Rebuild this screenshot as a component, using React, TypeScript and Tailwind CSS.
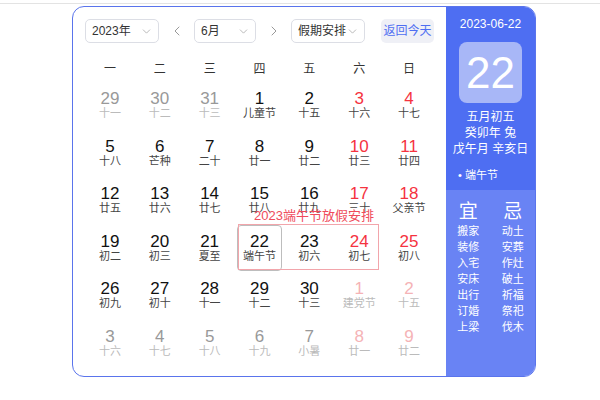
import { ChevronDown, ChevronLeft, ChevronRight } from "lucide-react";

type Day = { n: number; lunar: string; kind: "prev" | "cur" | "next" };

const ROWS: Day[][] = [
  [
    { n: 29, lunar: "十一", kind: "prev" },
    { n: 30, lunar: "十二", kind: "prev" },
    { n: 31, lunar: "十三", kind: "prev" },
    { n: 1, lunar: "儿童节", kind: "cur" },
    { n: 2, lunar: "十五", kind: "cur" },
    { n: 3, lunar: "十六", kind: "cur" },
    { n: 4, lunar: "十七", kind: "cur" },
  ],
  [
    { n: 5, lunar: "十八", kind: "cur" },
    { n: 6, lunar: "芒种", kind: "cur" },
    { n: 7, lunar: "二十", kind: "cur" },
    { n: 8, lunar: "廿一", kind: "cur" },
    { n: 9, lunar: "廿二", kind: "cur" },
    { n: 10, lunar: "廿三", kind: "cur" },
    { n: 11, lunar: "廿四", kind: "cur" },
  ],
  [
    { n: 12, lunar: "廿五", kind: "cur" },
    { n: 13, lunar: "廿六", kind: "cur" },
    { n: 14, lunar: "廿七", kind: "cur" },
    { n: 15, lunar: "廿八", kind: "cur" },
    { n: 16, lunar: "廿九", kind: "cur" },
    { n: 17, lunar: "三十", kind: "cur" },
    { n: 18, lunar: "父亲节", kind: "cur" },
  ],
  [
    { n: 19, lunar: "初二", kind: "cur" },
    { n: 20, lunar: "初三", kind: "cur" },
    { n: 21, lunar: "夏至", kind: "cur" },
    { n: 22, lunar: "端午节", kind: "cur" },
    { n: 23, lunar: "初六", kind: "cur" },
    { n: 24, lunar: "初七", kind: "cur" },
    { n: 25, lunar: "初八", kind: "cur" },
  ],
  [
    { n: 26, lunar: "初九", kind: "cur" },
    { n: 27, lunar: "初十", kind: "cur" },
    { n: 28, lunar: "十一", kind: "cur" },
    { n: 29, lunar: "十二", kind: "cur" },
    { n: 30, lunar: "十三", kind: "cur" },
    { n: 1, lunar: "建党节", kind: "next" },
    { n: 2, lunar: "十五", kind: "next" },
  ],
  [
    { n: 3, lunar: "十六", kind: "next" },
    { n: 4, lunar: "十七", kind: "next" },
    { n: 5, lunar: "十八", kind: "next" },
    { n: 6, lunar: "十九", kind: "next" },
    { n: 7, lunar: "小暑", kind: "next" },
    { n: 8, lunar: "廿一", kind: "next" },
    { n: 9, lunar: "廿二", kind: "next" },
  ],
];

const WEEK = ["一", "二", "三", "四", "五", "六", "日"];
const YI = ["搬家", "装修", "入宅", "安床", "出行", "订婚", "上梁"];
const JI = ["动土", "安葬", "作灶", "破土", "祈福", "祭祀", "伐木"];

export default function App() {
  return (
    <div className="min-h-[400px] bg-white pt-[3px] font-['Liberation_Sans','Noto_Sans_CJK_SC',sans-serif]">
      <div className="border-t border-[#e3e3e3] pt-[2px]">
        <div className="ml-[72px] flex h-[371px] w-[464px] overflow-hidden rounded-[12px] border border-[#5a74ec]">
          {/* Left: calendar */}
          <div className="w-[374px] px-3 pt-3">
            {/* Controls */}
            <div className="flex h-[24px] items-center">
              <Select label="2023年" width="w-[74px]" />
              <div className="flex w-[35px] justify-center text-[#999]">
                <ChevronLeft size={16} strokeWidth={1.5} />
              </div>
              <Select label="6月" width="w-[62px]" />
              <div className="flex w-[35px] justify-center text-[#999]">
                <ChevronRight size={16} strokeWidth={1.5} />
              </div>
              <Select label="假期安排" width="w-[74px]" />
              <button className="ml-[16px] h-[24px] w-[53px] rounded-[5px] bg-[#eff0f6] text-[12px] text-[#4e6ef2]">
                返回今天
              </button>
            </div>

            {/* Week header */}
            <div className="mt-[14px] grid h-[24px] grid-cols-7 items-center text-center text-[12px] text-[#333]">
              {WEEK.map((w) => (
                <span key={w}>{w}</span>
              ))}
            </div>

            {/* Days */}
            <div className="relative mt-[2px]">
              {ROWS.map((row, ri) => (
                <div key={ri} className="grid h-[47.5px] grid-cols-7">
                  {row.map((d, ci) => (
                    <DayCell key={ci} day={d} weekend={ci >= 5} selected={ri === 3 && ci === 3} />
                  ))}
                </div>
              ))}

              {/* Holiday overlay */}
              <div className="absolute left-[153px] top-[141px] h-[46px] w-[141px] border border-[#f2a5ab]" />
              <div className="absolute left-[154px] top-[124px] w-[150px] text-center text-[13px] leading-[18px] text-[#ef4b5b]">
                2023端午节放假安排
              </div>
            </div>
          </div>

          {/* Right: detail panel */}
          <div className="flex w-[90px] flex-col text-white">
            <div className="flex flex-col items-center bg-[#4e6ef2] pb-[7px] pt-[9px]">
              <div className="text-[12px] leading-[16px]">2023-06-22</div>
              <div className="mt-[10px] flex h-[61px] w-[63px] items-center justify-center rounded-[8px] bg-[#a8b7f7] text-[44px] leading-none">
                22
              </div>
              <div className="mt-[6px] text-center text-[12px] leading-[16px]">
                <div>五月初五</div>
                <div>癸卯年 兔</div>
                <div>戊午月 辛亥日</div>
              </div>
              <div className="mt-[10px] w-full pl-[12px] text-[11px] leading-[16px]">• 端午节</div>
            </div>
            <div className="flex-1 bg-[#6983f4] pt-[11px]">
              <div className="grid grid-cols-2 text-center">
                <div>
                  <div className="text-[19px] leading-[22px]">宜</div>
                  {YI.map((t) => (
                    <div key={t} className="text-[11px] leading-[16px]">
                      {t}
                    </div>
                  ))}
                </div>
                <div>
                  <div className="text-[19px] leading-[22px]">忌</div>
                  {JI.map((t) => (
                    <div key={t} className="text-[11px] leading-[16px]">
                      {t}
                    </div>
                  ))}
                </div>
              </div>
            </div>
          </div>
        </div>
      </div>
    </div>
  );
}

function Select({ label, width }: { label: string; width: string }) {
  return (
    <div
      className={`flex h-[24px] items-center justify-between rounded-[5px] border border-[#dcdee5] pl-[6px] pr-[5px] text-[12px] text-[#333] ${width}`}
    >
      <span>{label}</span>
      <ChevronDown size={13} strokeWidth={1.5} className="text-[#aaa]" />
    </div>
  );
}

function DayCell({ day, weekend, selected }: { day: Day; weekend: boolean; selected: boolean }) {
  let numColor = "text-[#111]";
  let lunarColor = "text-[#444]";
  if (day.kind === "cur" && weekend) numColor = "text-[#f5333f]";
  if (day.kind !== "cur") {
    numColor = weekend ? "text-[#f5b3b6]" : "text-[#999]";
    lunarColor = "text-[#bbb]";
  }
  return (
    <div className="flex items-center justify-center">
      <div
        className={`-mt-[3px] flex h-[46px] w-[45px] flex-col items-center justify-center rounded-[4px] ${
          selected ? "border border-[#bdbdbd]" : ""
        }`}
      >
        <span className={`text-[17px] leading-[17px] ${numColor}`}>{day.n}</span>
        <span className={`text-[11px] leading-[13px] ${lunarColor}`}>{day.lunar}</span>
      </div>
    </div>
  );
}
